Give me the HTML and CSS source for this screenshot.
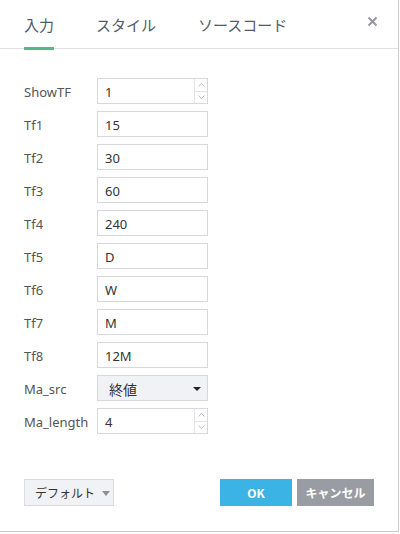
FILE: index.html
```html
<!DOCTYPE html>
<html>
<head>
<meta charset="utf-8">
<link rel="stylesheet" href="styles.css">
</head>
<body>
<div class="dialog">
  <div class="tabs">
    <div class="tab active">入力</div>
    <div class="tab">スタイル</div>
    <div class="tab">ソースコード</div>
    <div class="close">
      <svg width="11" height="11" viewBox="0 0 11 11"><path d="M1.5 1.5 L9.5 9.5 M9.5 1.5 L1.5 9.5" stroke="#9598a1" stroke-width="2"/></svg>
    </div>
  </div>
  <div class="form">
    <div class="row"><div class="label">ShowTF</div><div class="field spin"><span class="val">1</span><div class="spinbtns"><div class="sb"><svg width="7" height="4" viewBox="0 0 7 4"><path d="M0.5 3.5 L3.5 0.5 L6.5 3.5" fill="none" stroke="#b8bcc4"/></svg></div><div class="sb"><svg width="7" height="4" viewBox="0 0 7 4"><path d="M0.5 0.5 L3.5 3.5 L6.5 0.5" fill="none" stroke="#b8bcc4"/></svg></div></div></div></div>
    <div class="row"><div class="label">Tf1</div><div class="field"><span class="val">15</span></div></div>
    <div class="row"><div class="label">Tf2</div><div class="field"><span class="val">30</span></div></div>
    <div class="row"><div class="label">Tf3</div><div class="field"><span class="val">60</span></div></div>
    <div class="row"><div class="label">Tf4</div><div class="field"><span class="val">240</span></div></div>
    <div class="row"><div class="label">Tf5</div><div class="field"><span class="val">D</span></div></div>
    <div class="row"><div class="label">Tf6</div><div class="field"><span class="val">W</span></div></div>
    <div class="row"><div class="label">Tf7</div><div class="field"><span class="val">M</span></div></div>
    <div class="row"><div class="label">Tf8</div><div class="field"><span class="val">12M</span></div></div>
    <div class="row"><div class="label">Ma_src</div><div class="field select"><span class="val">終値</span><span class="caret"></span></div></div>
    <div class="row"><div class="label">Ma_length</div><div class="field spin"><span class="val">4</span><div class="spinbtns"><div class="sb"><svg width="7" height="4" viewBox="0 0 7 4"><path d="M0.5 3.5 L3.5 0.5 L6.5 3.5" fill="none" stroke="#b8bcc4"/></svg></div><div class="sb"><svg width="7" height="4" viewBox="0 0 7 4"><path d="M0.5 0.5 L3.5 3.5 L6.5 0.5" fill="none" stroke="#b8bcc4"/></svg></div></div></div></div>
  </div>
  <div class="footer">
    <div class="btn default">デフォルト<span class="caret grey"></span></div>
    <div class="spacer"></div>
    <div class="btn ok">OK</div>
    <div class="btn cancel">キャンセル</div>
  </div>
</div>
</body>
</html>
```

FILE: styles.css
```css
html, body {
  margin: 0;
  padding: 0;
  background: #fff;
}
body {
  font-family: "Noto Sans", "Noto Sans CJK JP", sans-serif;
  color: #4a4a4a;
}
.dialog {
  width: 398px;
  height: 531px;
  border-right: 1px solid #c9cbd0;
  border-bottom: 1px solid #c9cbd0;
  display: flex;
  flex-direction: column;
  position: relative;
}
.tabs {
  height: 48px;
  border-bottom: 1px solid #dfe1e6;
  display: flex;
  align-items: stretch;
  padding-left: 24px;
  flex-shrink: 0;
}
.tab {
  font-family: "Noto Sans CJK JP", sans-serif;
  font-size: 15px;
  color: #535b68;
  display: flex;
  align-items: center;
  margin-right: 42px;
  border-bottom: 3px solid transparent;
  margin-bottom: -1px;
  box-sizing: border-box;
  height: 50px;
  padding-top: 2px;
}
.tab.active {
  border-bottom-color: #53b987;
}
.close {
  position: absolute;
  right: 20px;
  top: 16px;
}
.close svg { display: block; }
.form {
  padding: 29px 0 0 24px;
  display: flex;
  flex-direction: column;
  gap: 7px;
}
.row {
  display: flex;
  align-items: center;
  height: 26px;
  flex-shrink: 0;
}
.label {
  width: 73px;
  font-size: 13px;
  color: #555;
  padding-top: 1px;
}
.field {
  width: 111px;
  height: 26px;
  box-sizing: border-box;
  border: 1px solid #d6d8dd;
  display: flex;
  align-items: center;
  padding-left: 7px;
  font-size: 13px;
  color: #333;
  background: #fff;
}
.val { flex: 1; padding-top: 1px; }
.spin { padding-right: 0; }
.spinbtns {
  width: 12px;
  height: 24px;
  border-left: 1px solid #e3e5e9;
  display: flex;
  flex-direction: column;
}
.sb {
  flex: 1;
  display: flex;
  align-items: center;
  justify-content: center;
}
.sb + .sb { border-top: 1px solid #e3e5e9; }
.select {
  background: #f1f2f6;
  padding-left: 11px;
  padding-right: 6px;
  font-family: "Noto Sans CJK JP", sans-serif;
  font-size: 14px;
}
.caret {
  width: 0;
  height: 0;
  border-left: 4px solid transparent;
  border-right: 4px solid transparent;
  border-top: 4px solid #222;
  margin-top: 2px;
}
.caret.grey {
  border-top-color: #8c8f96;
  margin-left: 7px;
  border-left-width: 4.5px;
  border-right-width: 4.5px;
  border-top-width: 5px;
}
.footer {
  margin-top: auto;
  padding: 0 24px 25px 24px;
  display: flex;
  align-items: center;
}
.spacer { flex: 1; }
.btn {
  height: 27px;
  box-sizing: border-box;
  display: flex;
  align-items: center;
  justify-content: center;
  font-family: "Noto Sans CJK JP", sans-serif;
  font-size: 12px;
}
.default {
  width: 90px;
  border: 1px solid #d8dade;
  background: #f1f2f6;
  color: #333;
  font-size: 12px;
  justify-content: flex-start;
  padding-left: 10px;
}
.ok {
  width: 72px;
  background: #3bb3e4;
  color: #fff;
  font-weight: bold;
  margin-right: 5px;
}
.cancel {
  width: 77px;
  background: #9a9ca3;
  color: #fff;
  font-weight: bold;
}
```
